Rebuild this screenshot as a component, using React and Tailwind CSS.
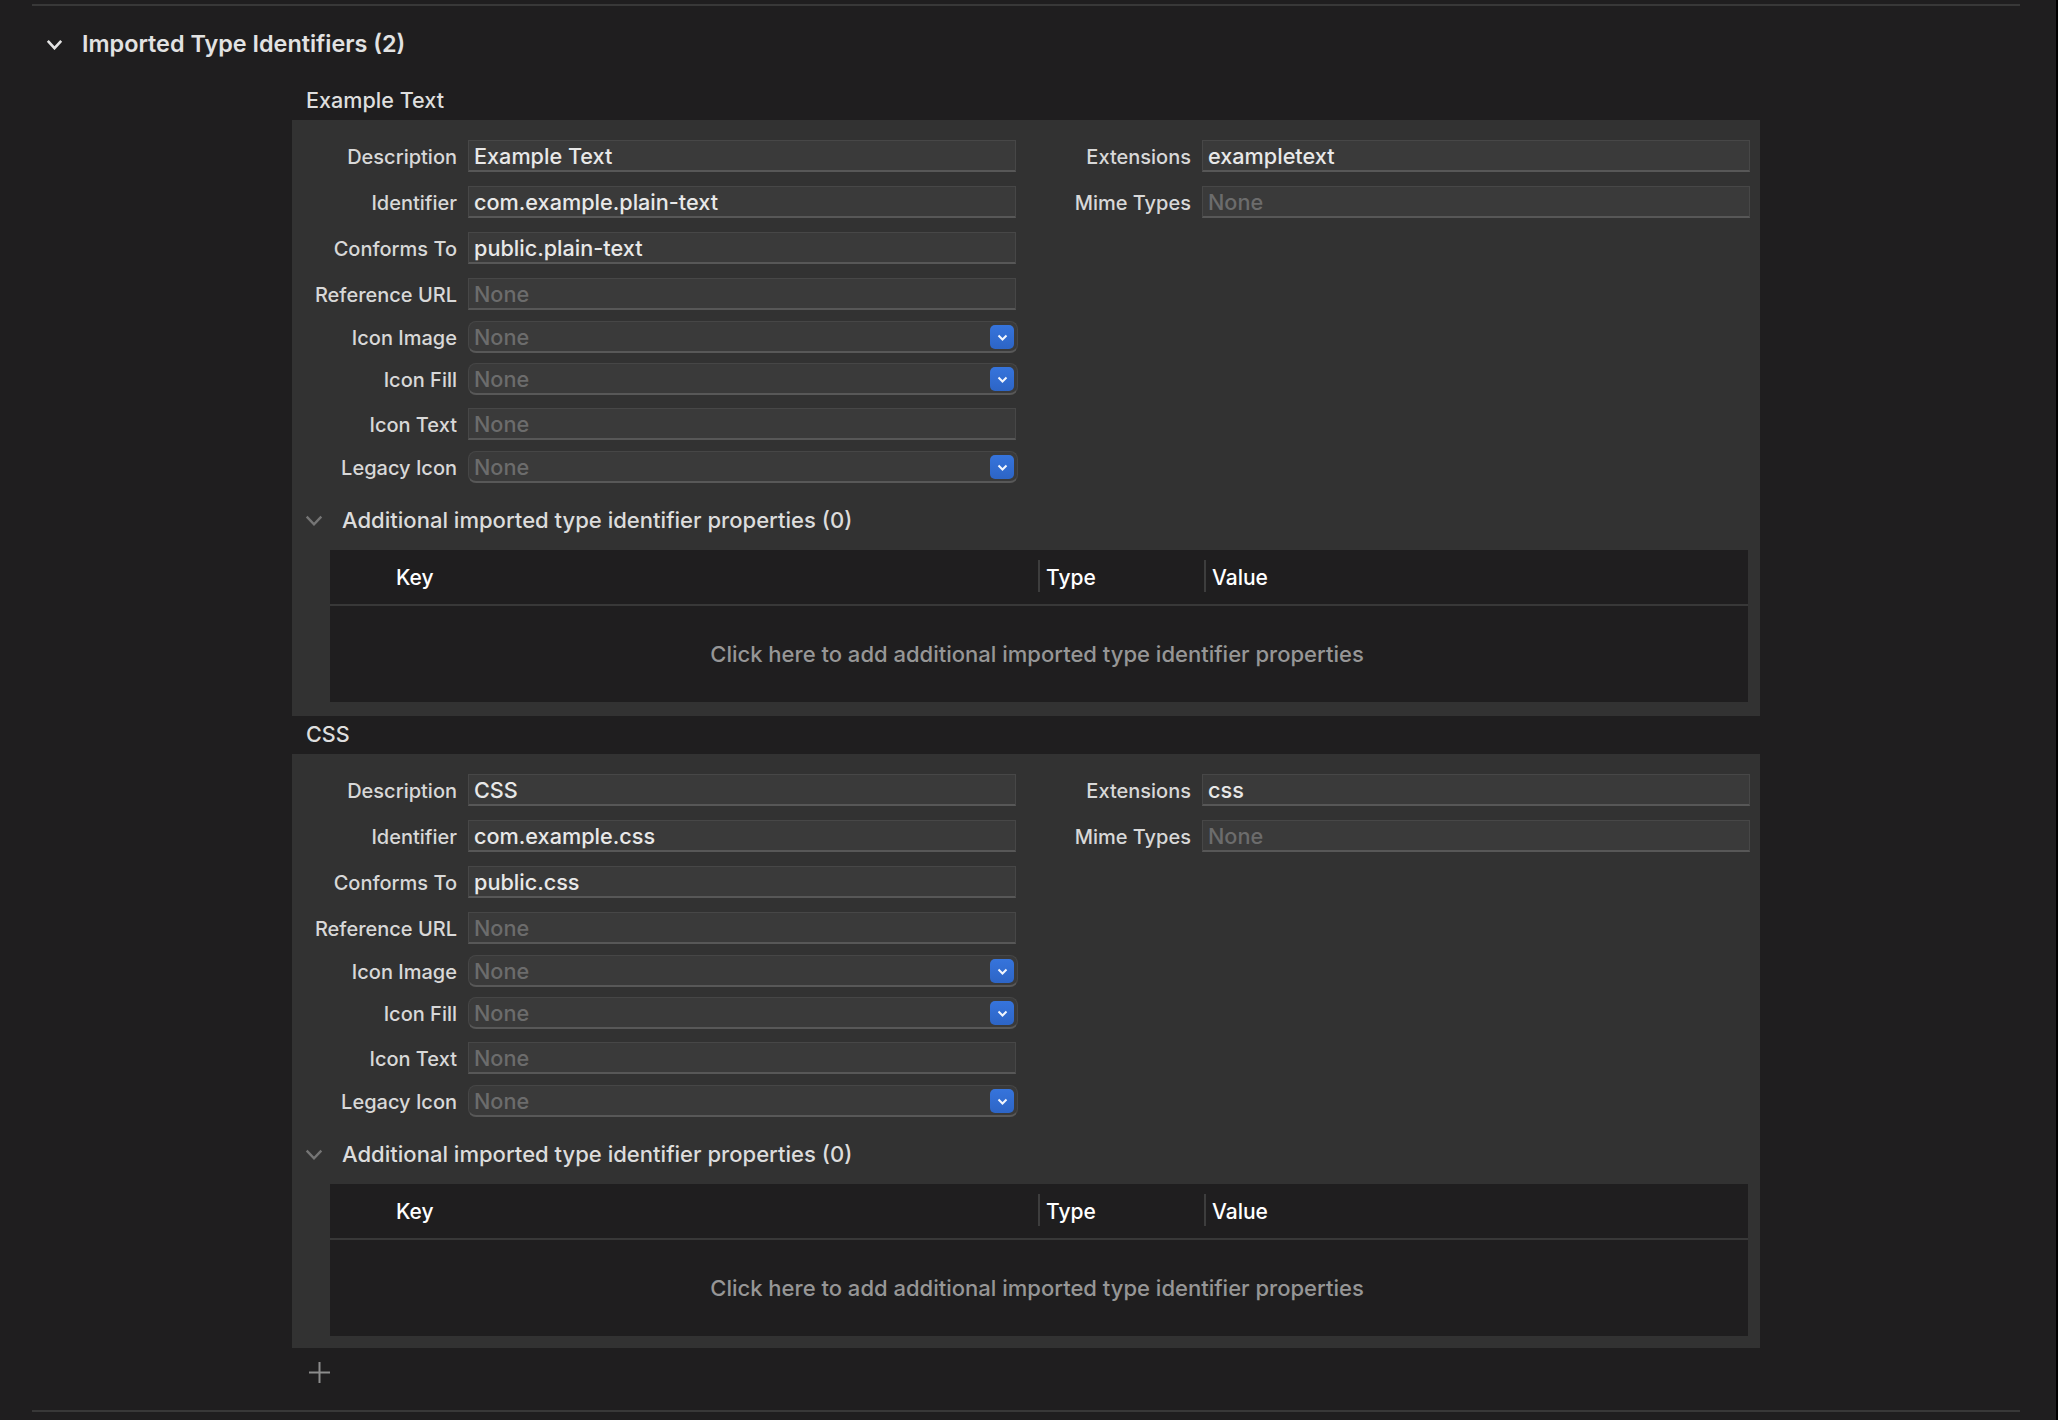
const fontStyle = "font-['Inter','Liberation_Sans',sans-serif]";

function Chevron({ className, width, height, stroke, sw }) {
  return (
    <svg className={className} width={width} height={height} viewBox={`0 0 ${width} ${height}`} fill="none">
      <polyline
        points={`${sw / 2 + 0.5},${sw / 2 + 0.5} ${width / 2},${height - sw / 2 - 0.5} ${width - sw / 2 - 0.5},${sw / 2 + 0.5}`}
        stroke={stroke}
        strokeWidth={sw}
      />
    </svg>
  );
}

function Field({ value, placeholder, select }) {
  const shape = select
    ? "w-[550px] rounded-[8px] border-x border-t border-[#464646] border-b-2 border-b-[#585858] pr-[3px]"
    : "w-[548px] border-x border-t border-[#474747] border-b-2 border-b-[#575757]";
  return (
    <div className={`${shape} flex h-[32px] items-center bg-[#3a3a3a] pl-[5px]`}>
      <span className={`pt-[2px] text-[21.65px] font-[450] leading-none ${placeholder ? "text-[#6c6c6c]" : "text-[#e8e8e8]"}`}>
        {placeholder || value}
      </span>
      {select && (
        <span className="ml-auto mt-[1px] flex h-[24px] w-[24px] items-center justify-center rounded-[5px] bg-gradient-to-b from-[#3674dc] to-[#2d65c6]">
          <Chevron width={11} height={7} stroke="#f2f6fd" sw={2} />
        </span>
      )}
    </div>
  );
}

function Row({ label, labelW = "w-[165px]", mt, children }) {
  return (
    <div className={`flex items-center gap-[11px] ${mt}`}>
      <div className={`${labelW} pt-[2px] text-right text-[20px] font-[450] leading-none text-[#d8d8d8]`}>{label}</div>
      {children}
    </div>
  );
}

function TypeSection({ name, desc, id, conforms, ext, pb }) {
  return (
    <div className="ml-[292px] w-[1468px]">
      <div className="flex h-[38px] items-center pb-[1px] pl-[14px] text-[21.6px] font-[450] leading-none text-[#dedede]">{name}</div>
      <div className={`bg-[#323232] pt-[20px] ${pb}`}>
        <div className="flex">
          <div className="w-[726px]">
            <Row label="Description" mt="mt-0"><Field value={desc} /></Row>
            <Row label="Identifier" mt="mt-[14px]"><Field value={id} /></Row>
            <Row label="Conforms To" mt="mt-[14px]"><Field value={conforms} /></Row>
            <Row label="Reference URL" mt="mt-[14px]"><Field placeholder="None" /></Row>
            <Row label="Icon Image" mt="mt-[11px]"><Field placeholder="None" select /></Row>
            <Row label="Icon Fill" mt="mt-[10px]"><Field placeholder="None" select /></Row>
            <Row label="Icon Text" mt="mt-[13px]"><Field placeholder="None" /></Row>
            <Row label="Legacy Icon" mt="mt-[11px]"><Field placeholder="None" select /></Row>
          </div>
          <div className="w-[742px]">
            <Row label="Extensions" labelW="w-[173px]" mt="mt-0"><Field value={ext} /></Row>
            <Row label="Mime Types" labelW="w-[173px]" mt="mt-[14px]"><Field placeholder="None" /></Row>
          </div>
        </div>
        <div className="mt-[25px] flex h-[24px] items-center">
          <Chevron className="ml-[13px]" width={18} height={11} stroke="#757575" sw={2.4} />
          <span className="ml-[19px] text-[22.05px] font-[450] leading-none text-[#dcdcdc]">Additional imported type identifier properties (0)</span>
        </div>
        <div className="ml-[38px] mt-[18px] w-[1418px] bg-[#1f1e1f]">
          <div className="flex h-[56px] items-center border-b-2 border-[#383838] text-[21px] font-medium leading-none text-white">
            <span className="ml-[66px] w-[642px]">Key</span>
            <span className="-mt-[2px] h-[32px] w-[2px] bg-[#3d3d3d]" />
            <span className="ml-[6px] w-[158px]">Type</span>
            <span className="-mt-[2px] h-[32px] w-[2px] bg-[#3d3d3d]" />
            <span className="ml-[6px]">Value</span>
          </div>
          <div className="flex h-[96px] items-center justify-center pr-[4px] text-[22.03px] font-[450] leading-none text-[#969696]">
            Click here to add additional imported type identifier properties
          </div>
        </div>
      </div>
    </div>
  );
}

export default function App() {
  return (
    <div className={`${fontStyle} flex h-[1420px] w-[2058px] flex-col border-r-2 border-black bg-[#1f1e1f] antialiased`}>
      <div className="ml-[32px] mt-[4px] h-[2px] w-[1988px] bg-[#383838]" />
      <div className="flex h-[76px] items-center">
        <Chevron className="ml-[46px]" width={17} height={11} stroke="#e4e4e4" sw={2.6} />
        <span className="ml-[19px] text-[23.4px] font-semibold leading-none text-[#e2e2e2]">Imported Type Identifiers (2)</span>
      </div>
      <TypeSection name="Example Text" desc="Example Text" id="com.example.plain-text" conforms="public.plain-text" ext="exampletext" pb="pb-[14px]" />
      <TypeSection name="CSS" desc="CSS" id="com.example.css" conforms="public.css" ext="css" pb="pb-[12px]" />
      <div className="h-[62px] pl-[17px] pt-[14px]">
        <svg className="ml-[292px]" width="21" height="21" viewBox="0 0 21 21" fill="none" stroke="#8c8c8c" strokeWidth="2">
          <path d="M10.5 0V21M0 10.5H21" />
        </svg>
      </div>
      <div className="ml-[32px] h-[2px] w-[1988px] bg-[#383838]" />
    </div>
  );
}
